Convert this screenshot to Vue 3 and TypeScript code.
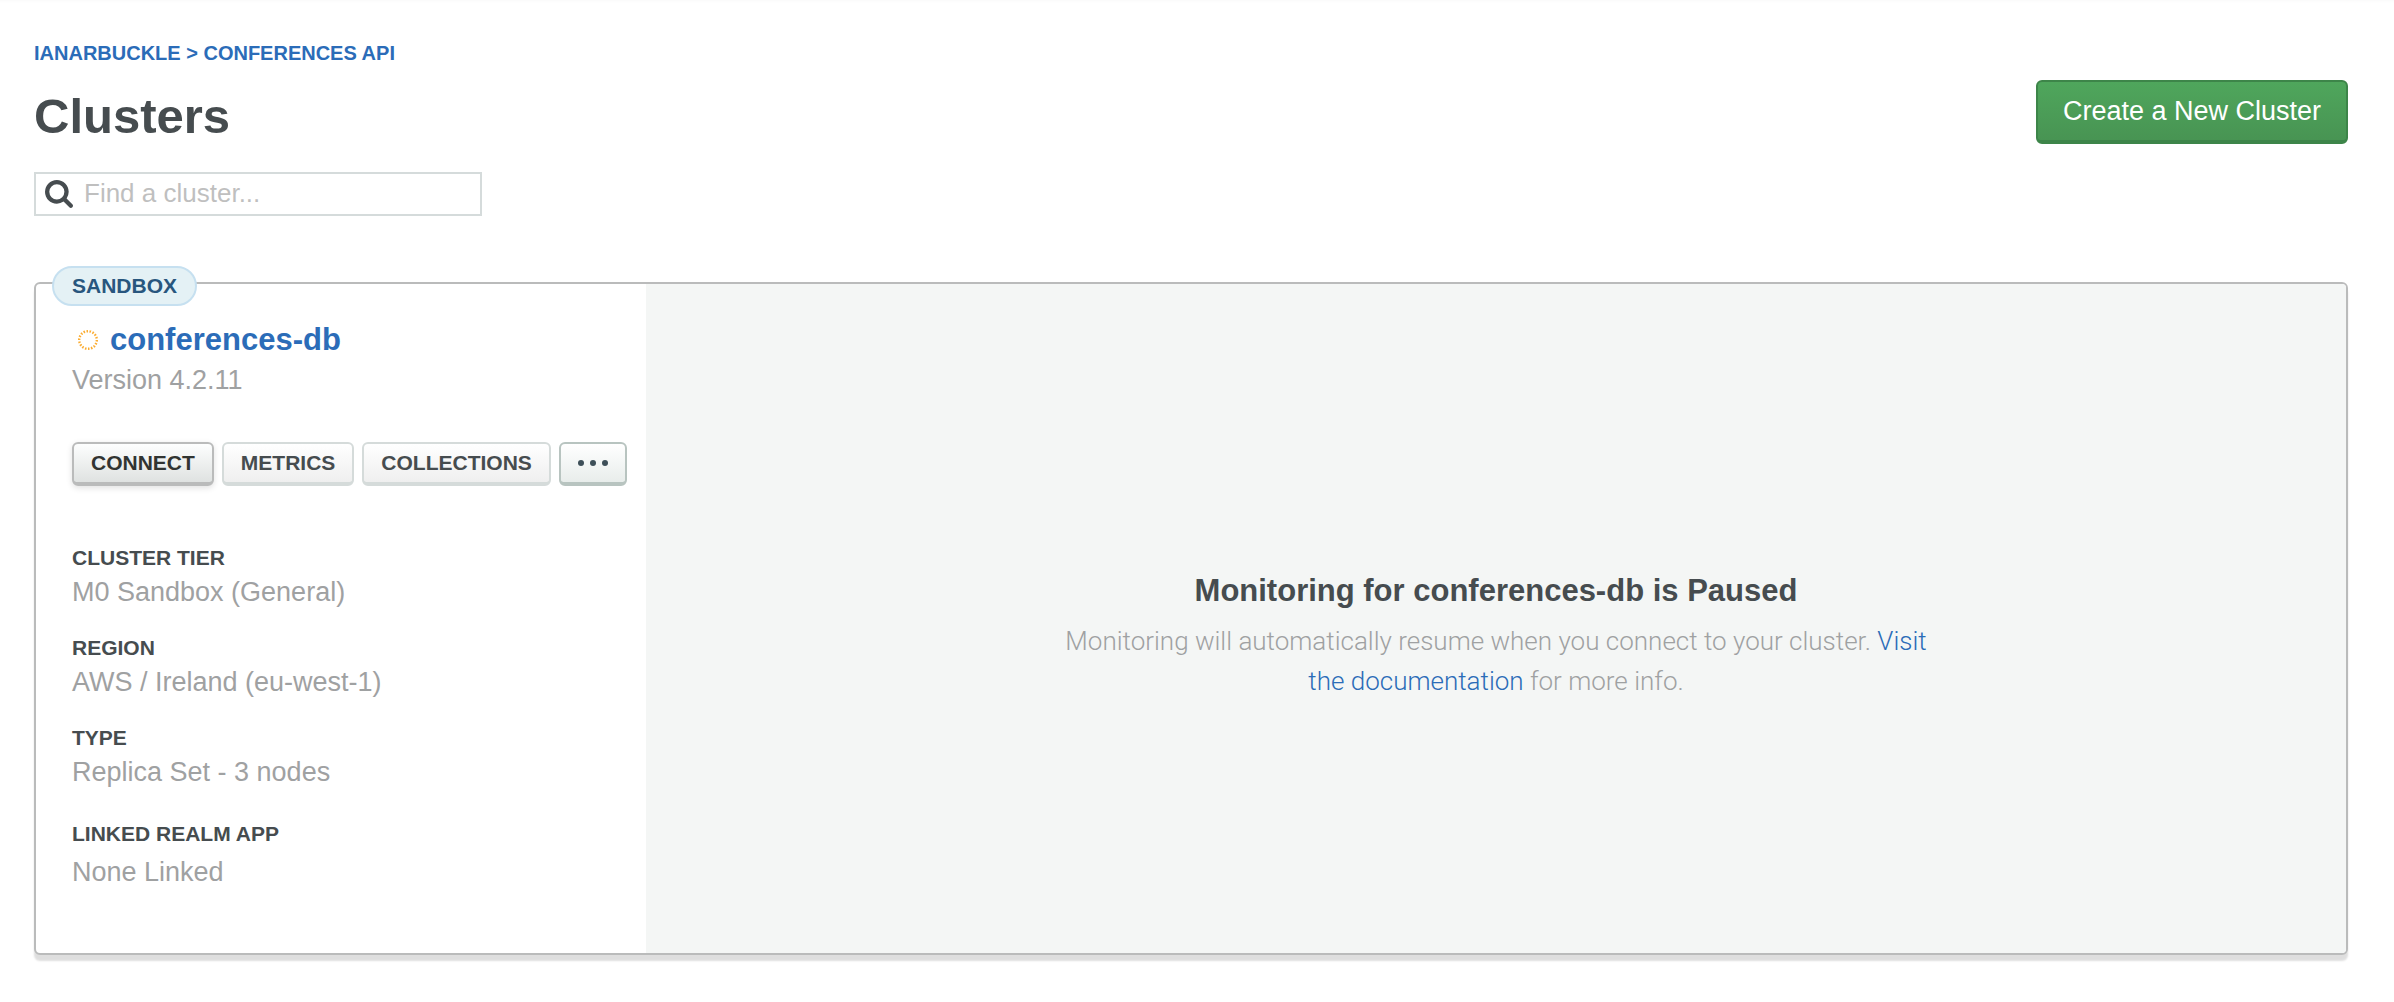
<script setup lang="ts">
import { ref } from 'vue'

interface Detail {
  label: string
  value: string
  spaced?: boolean
}

const search = ref('')

const cluster = {
  name: 'conferences-db',
  version: '4.2.11',
  plan: 'SANDBOX',
}

const details: Detail[] = [
  { label: 'CLUSTER TIER', value: 'M0 Sandbox (General)' },
  { label: 'REGION', value: 'AWS / Ireland (eu-west-1)' },
  { label: 'TYPE', value: 'Replica Set - 3 nodes' },
  { label: 'LINKED REALM APP', value: 'None Linked', spaced: true },
]
</script>

<template>
  <main class="page">
    <nav class="breadcrumb" aria-label="Breadcrumb">
      <a href="#">IANARBUCKLE &gt; CONFERENCES API</a>
    </nav>

    <header class="header">
      <div class="header-main">
        <h1 class="title">Clusters</h1>
        <label class="search">
          <svg class="search-icon" viewBox="0 0 1664 1664" aria-hidden="true">
            <path
              d="M1152 704q0-185-131.500-316.500t-316.500-131.500-316.500 131.500-131.500 316.500 131.500 316.500 316.500 131.500 316.500-131.500 131.500-316.500zm512 832q0 52-38 90t-90 38q-54 0-90-38l-343-342q-179 124-399 124-143 0-273.500-55.500t-225-150-150-225-55.500-273.500 55.500-273.500 150-225 225-150 273.500-55.500 273.500 55.500 225 150 150 225 55.500 273.500q0 220-124 399l343 343q37 37 37 90z"
            />
          </svg>
          <input v-model="search" type="text" placeholder="Find a cluster..." aria-label="Find a cluster" />
        </label>
      </div>
      <button type="button" class="create">Create a New Cluster</button>
    </header>

    <section class="card">
      <span class="badge">{{ cluster.plan }}</span>

      <div class="summary">
        <h2 class="name">
          <svg class="status" viewBox="0 0 20 20" aria-hidden="true">
            <circle cx="10" cy="10" r="8.8" pathLength="72" />
          </svg>
          <a href="#">{{ cluster.name }}</a>
        </h2>
        <p class="version">Version {{ cluster.version }}</p>

        <div class="actions">
          <button type="button" class="action connect">CONNECT</button>
          <button type="button" class="action">METRICS</button>
          <button type="button" class="action">COLLECTIONS</button>
          <button type="button" class="action more" aria-label="More actions">
            <svg viewBox="0 0 30 6" aria-hidden="true">
              <circle cx="3" cy="3" r="3" />
              <circle cx="15" cy="3" r="3" />
              <circle cx="27" cy="3" r="3" />
            </svg>
          </button>
        </div>

        <dl class="details">
          <div v-for="item in details" :key="item.label" class="detail" :class="{ spaced: item.spaced }">
            <dt>{{ item.label }}</dt>
            <dd>{{ item.value }}</dd>
          </div>
        </dl>
      </div>

      <div class="monitoring">
        <h3>Monitoring for {{ cluster.name }} is Paused</h3>
        <p>
          Monitoring will automatically resume when you connect to your cluster.
          <a href="#">Visit the documentation</a> for more info.
        </p>
      </div>
    </section>
  </main>
</template>

<style>
body {
  background: #fff;
}
</style>

<style scoped>
.page {
  box-sizing: border-box;
  padding: 39px 46px 46px 34px;
  font-family: 'Liberation Sans', Arial, sans-serif;
  color: #464c4f;
  box-shadow: inset 0 4px 4px -4px rgba(0, 0, 0, 0.04);
}

h1,
h2,
h3,
p,
dl,
dd {
  margin: 0;
}

a {
  color: #2b6cb8;
  text-decoration: none;
}

button {
  font-family: inherit;
  cursor: pointer;
}

.breadcrumb {
  font-size: 20px;
  font-weight: 700;
  line-height: 28px;
}

.header {
  display: flex;
  justify-content: space-between;
  align-items: flex-start;
}

.title {
  margin-top: 19px;
  font-size: 49px;
  line-height: 60px;
  color: #464c4f;
}

.search {
  box-sizing: border-box;
  display: flex;
  align-items: center;
  gap: 11px;
  width: 448px;
  height: 44px;
  margin-top: 26px;
  padding: 0 9px;
  border: 2px solid #d5dbdb;
}

.search-icon {
  flex: none;
  width: 28px;
  height: 28px;
  fill: #464c4f;
}

.search input {
  flex: 1;
  min-width: 0;
  height: 38px;
  padding: 0 0 2px;
  border: 0;
  outline: 0;
  background: none;
  font-family: inherit;
  font-size: 26px;
  color: #464c4f;
}

.search input::placeholder {
  color: #bfbfbf;
  opacity: 1;
}

.create {
  box-sizing: border-box;
  height: 64px;
  margin-top: 13px;
  padding: 0 25px;
  border: 2px solid #3d8549;
  border-bottom-width: 4px;
  border-radius: 6px;
  background: linear-gradient(#4fa65c, #489453);
  color: #fff;
  font-size: 27px;
}

.card {
  position: relative;
  display: flex;
  margin-top: 66px;
  border: 2px solid #babbbb;
  border-radius: 6px;
  box-shadow: 0 6px 2px rgba(0, 0, 0, 0.13);
  background: #fff;
}

.badge {
  position: absolute;
  top: -18px;
  left: 16px;
  padding: 0 18px;
  border: 2px solid #c6e0f0;
  border-radius: 20px;
  background: #e4f1f5;
  color: #28567e;
  font-size: 21px;
  font-weight: 700;
  line-height: 36px;
}

.summary {
  box-sizing: border-box;
  flex: none;
  width: 610px;
  padding: 36px 20px 61px 36px;
}

.name {
  display: flex;
  align-items: center;
  gap: 12px;
  padding-left: 6px;
  font-size: 31px;
  line-height: 40px;
}

.status {
  flex: none;
  width: 20px;
  height: 20px;
  fill: none;
  stroke: #fbac30;
  stroke-width: 2.4;
  stroke-dasharray: 2 2;
}

.version {
  font-size: 27px;
  line-height: 40px;
  color: #9fa1a2;
}

.actions {
  display: flex;
  gap: 8px;
  margin-top: 42px;
}

.action {
  box-sizing: border-box;
  height: 44px;
  padding: 0 17px;
  border: 2px solid #d5dbda;
  border-bottom-width: 4px;
  border-radius: 6px;
  background: linear-gradient(#fff, #efefef);
  color: #464c4f;
  font-size: 21px;
  font-weight: 700;
}

.connect {
  border-color: #babbbb;
  background: linear-gradient(#fdfefe, #dfe2e1);
  color: #313432;
  box-shadow: 0 2px 6px rgba(0, 0, 0, 0.12);
}

.more {
  display: flex;
  align-items: center;
  justify-content: center;
  width: 68px;
  border-color: #b8c4c0;
  background: linear-gradient(#fff, #e8edeb);
}

.more svg {
  flex: none;
  width: 30px;
  height: 6px;
  fill: #3d4f58;
}

.details {
  margin-top: 58px;
}

.detail + .detail {
  margin-top: 22px;
}

.detail.spaced {
  display: flex;
  flex-direction: column;
  gap: 4px;
}

.detail + .detail.spaced {
  margin-top: 28px;
}

dt {
  font-size: 21px;
  font-weight: 700;
  line-height: 28px;
}

dd {
  font-size: 27px;
  line-height: 40px;
  color: #9fa1a2;
}

.monitoring {
  flex: 1;
  display: flex;
  flex-direction: column;
  align-items: center;
  justify-content: center;
  gap: 10px;
  padding-top: 34px;
  border-radius: 0 4px 4px 0;
  background: #f4f6f5;
  text-align: center;
}

.monitoring h3 {
  font-size: 31px;
  line-height: 40px;
}

.monitoring p {
  max-width: 890px;
  font-family: Roboto, 'Liberation Sans', sans-serif;
  font-size: 26px;
  font-weight: 300;
  line-height: 40px;
  color: #9fa1a2;
}
</style>
